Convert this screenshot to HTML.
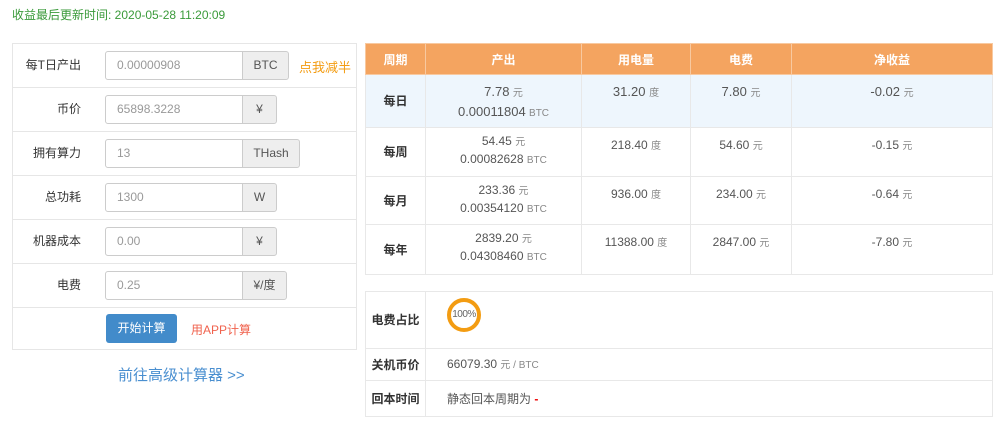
<!DOCTYPE html>
<html><head><meta charset="utf-8"><style>
*{box-sizing:border-box;margin:0;padding:0}
body{width:1000px;height:422px;background:#fff;font-family:"Liberation Sans","Noto Sans CJK SC",sans-serif;font-size:12px;color:#333;position:relative;overflow:hidden}
.abs{position:absolute}
.top{left:12px;top:6px;color:#3a9a3a;font-size:12px}
.lp{left:12px;top:43px;width:345px;height:307px;border:1px solid #e6e6e6}
.row{position:absolute;left:0;width:343px;height:44px;border-bottom:1px solid #e6e6e6}
.lab{position:absolute;right:275px;top:12px;font-size:12px;color:#333;white-space:nowrap}
.inp{position:absolute;left:92px;top:7px;height:29px;width:138px;border:1px solid #ccc;border-radius:3px 0 0 3px;color:#999;padding-left:11px;line-height:27px;font-size:12px}
.ad{position:absolute;left:229px;top:7px;height:29px;border:1px solid #ccc;border-radius:0 3px 3px 0;background:#eee;line-height:27px;text-align:center;font-size:12px;color:#555}
table{border-collapse:collapse;position:absolute}
td,th{border:1px solid #e8e8e8;text-align:center;font-size:12px;color:#555}
th{background:#f4a460;color:#fff;font-weight:bold;border-color:#f8c9a0;height:31px}
td.h{font-weight:bold;color:#333}
td{vertical-align:top;padding-top:8px;line-height:18px}
td.h{vertical-align:middle;padding-top:0}
.u{font-size:10px;color:#888}
.b td{vertical-align:middle;padding:0;text-align:left}
</style></head><body>
<div class="abs top">收益最后更新时间: 2020-05-28 11:20:09</div>
<div class="abs lp">
 <div class="row" style="top:0"><span class="lab">每T日产出</span><div class="inp">0.00000908</div><div class="ad" style="width:47px">BTC</div><span class="abs" style="left:286px;top:13px;color:#f39c12;font-size:13px">点我减半</span></div>
 <div class="row" style="top:44px"><span class="lab">币价</span><div class="inp">65898.3228</div><div class="ad" style="width:35px">¥</div></div>
 <div class="row" style="top:88px"><span class="lab">拥有算力</span><div class="inp">13</div><div class="ad" style="width:58px">THash</div></div>
 <div class="row" style="top:132px"><span class="lab">总功耗</span><div class="inp">1300</div><div class="ad" style="width:35px">W</div></div>
 <div class="row" style="top:176px"><span class="lab">机器成本</span><div class="inp">0.00</div><div class="ad" style="width:35px">¥</div></div>
 <div class="row" style="top:220px"><span class="lab">电费</span><div class="inp">0.25</div><div class="ad" style="width:45px">¥/度</div></div>
 <div class="row" style="top:264px;border:none"><div class="abs" style="left:93px;top:6px;width:71px;height:29px;background:#428bca;border-radius:3px;color:#fff;text-align:center;line-height:29px;font-size:12px">开始计算</div><span class="abs" style="left:178px;top:13px;color:#f0624d;font-size:12px">用APP计算</span></div>
</div>
<div class="abs" style="left:118px;top:364px;color:#4a8fd0;font-size:15px">前往高级计算器 &gt;&gt;</div>
<table style="left:365px;top:43px;width:628px">
<tr><th style="width:60px">周期</th><th style="width:156px">产出</th><th style="width:109px">用电量</th><th style="width:101px">电费</th><th>净收益</th></tr>
<tr style="height:53px;background:#eef6fd"><td class="h">每日</td><td><span style="font-size:13px">7.78</span> <span class="u">元</span><br><span style="font-size:13px">0.00011804</span> <span class="u">BTC</span></td><td style="font-size:13px">31.20 <span class="u">度</span></td><td style="font-size:13px">7.80 <span class="u">元</span></td><td style="font-size:13px">-0.02 <span class="u">元</span></td></tr>
<tr style="height:49px"><td class="h">每周</td><td style="padding-top:5px;line-height:17px">54.45 <span class="u">元</span><br>0.00082628 <span class="u">BTC</span></td><td>218.40 <span class="u">度</span></td><td>54.60 <span class="u">元</span></td><td>-0.15 <span class="u">元</span></td></tr>
<tr style="height:48px"><td class="h">每月</td><td style="padding-top:5px;line-height:17px">233.36 <span class="u">元</span><br>0.00354120 <span class="u">BTC</span></td><td>936.00 <span class="u">度</span></td><td>234.00 <span class="u">元</span></td><td>-0.64 <span class="u">元</span></td></tr>
<tr style="height:50px"><td class="h">每年</td><td style="padding-top:5px;line-height:17px">2839.20 <span class="u">元</span><br>0.04308460 <span class="u">BTC</span></td><td>11388.00 <span class="u">度</span></td><td>2847.00 <span class="u">元</span></td><td>-7.80 <span class="u">元</span></td></tr>
</table>
<table class="b" style="left:365px;top:291px;width:628px">
<tr style="height:57px"><td class="h" style="width:60px;text-align:center">电费占比</td><td style="padding-left:21px"><div style="width:34px;height:34px;border:4px solid #f39c12;border-radius:50%;font-size:10px;line-height:26px;text-align:center;color:#666;margin-top:-10px;letter-spacing:-0.5px">100%</div></td></tr>
<tr style="height:32px"><td class="h" style="text-align:center">关机币价</td><td style="padding-left:21px">66079.30 <span class="u">元 / BTC</span></td></tr>
<tr style="height:36px"><td class="h" style="text-align:center">回本时间</td><td style="padding-left:21px">静态回本周期为 <span style="color:#e00;font-weight:bold">-</span></td></tr>
</table>
</body></html>
